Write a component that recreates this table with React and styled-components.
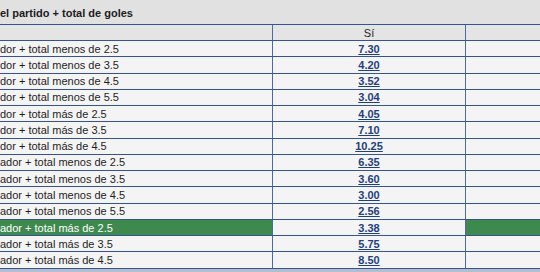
import React from 'react';
import styled, { createGlobalStyle } from 'styled-components';

const GlobalStyle = createGlobalStyle`
  html, body {
    margin: 0;
    padding: 0;
    background: #f4f4f4;
    overflow: hidden;
  }
  body {
    font-family: "Liberation Sans", Arial, sans-serif;
  }
`;

const Market = styled.section`
  width: 540px;
  height: 272px;
  overflow: hidden;
  background: #f4f4f4;
`;

const TitleBar = styled.div`
  height: 25px;
  box-sizing: border-box;
  display: flex;
  align-items: center;
  padding-top: 2px;
  background: #e1e1e1;
  border-bottom: 1px solid #34558f;
  font-size: 11px;
  font-weight: bold;
  color: #1c1c1c;
  white-space: nowrap;
`;

const Row = styled.div`
  display: grid;
  grid-template-columns: 273px 193px 1fr;
  height: ${(p) => (p.$head ? '15px' : '15.27px')};
  border-bottom: 1px solid #34558f;
  background: ${(p) => (p.$head ? '#e4e4e4' : '#f4f4f4')};
`;

const Cell = styled.div`
  display: flex;
  align-items: center;
  justify-content: ${(p) => (p.$center ? 'center' : 'flex-start')};
  border-right: ${(p) => (p.$last ? 'none' : '1px solid #4d6ba0')};
  background: ${(p) => (p.$win ? '#3e8a4e' : 'transparent')};
  color: ${(p) => (p.$win ? '#ffffff' : '#1e1e1e')};
  font-size: 11px;
  white-space: nowrap;
  overflow: hidden;
  line-height: 1;
  padding-top: 1px;
`;

const Odd = styled.a`
  color: #1f3f7f;
  font-weight: bold;
  text-decoration: underline;
  font-size: 11px;
`;

const Foot = styled.div`
  height: 10px;
  background: #b3bfd1;
`;

const rows = [
  ['dor + total menos de 2.5', '7.30'],
  ['dor + total menos de 3.5', '4.20'],
  ['dor + total menos de 4.5', '3.52'],
  ['dor + total menos de 5.5', '3.04'],
  ['dor + total más de 2.5', '4.05'],
  ['dor + total más de 3.5', '7.10'],
  ['dor + total más de 4.5', '10.25'],
  ['ador + total menos de 2.5', '6.35'],
  ['ador + total menos de 3.5', '3.60'],
  ['ador + total menos de 4.5', '3.00'],
  ['ador + total menos de 5.5', '2.56'],
  ['ador + total más de 2.5', '3.38', true],
  ['ador + total más de 3.5', '5.75'],
  ['ador + total más de 4.5', '8.50'],
];

const App = () => {
  return (
    <Market>
      <GlobalStyle />
      <TitleBar>el partido + total de goles</TitleBar>
      <Row $head>
        <Cell />
        <Cell $center>Sí</Cell>
        <Cell $last />
      </Row>
      {rows.map(([label, odd, win]) => (
        <Row key={label}>
          <Cell $win={win}>{label}</Cell>
          <Cell $center>
            <Odd href="#">{odd}</Odd>
          </Cell>
          <Cell $last $win={win} />
        </Row>
      ))}
      <Foot />
    </Market>
  );
};

export default App;
